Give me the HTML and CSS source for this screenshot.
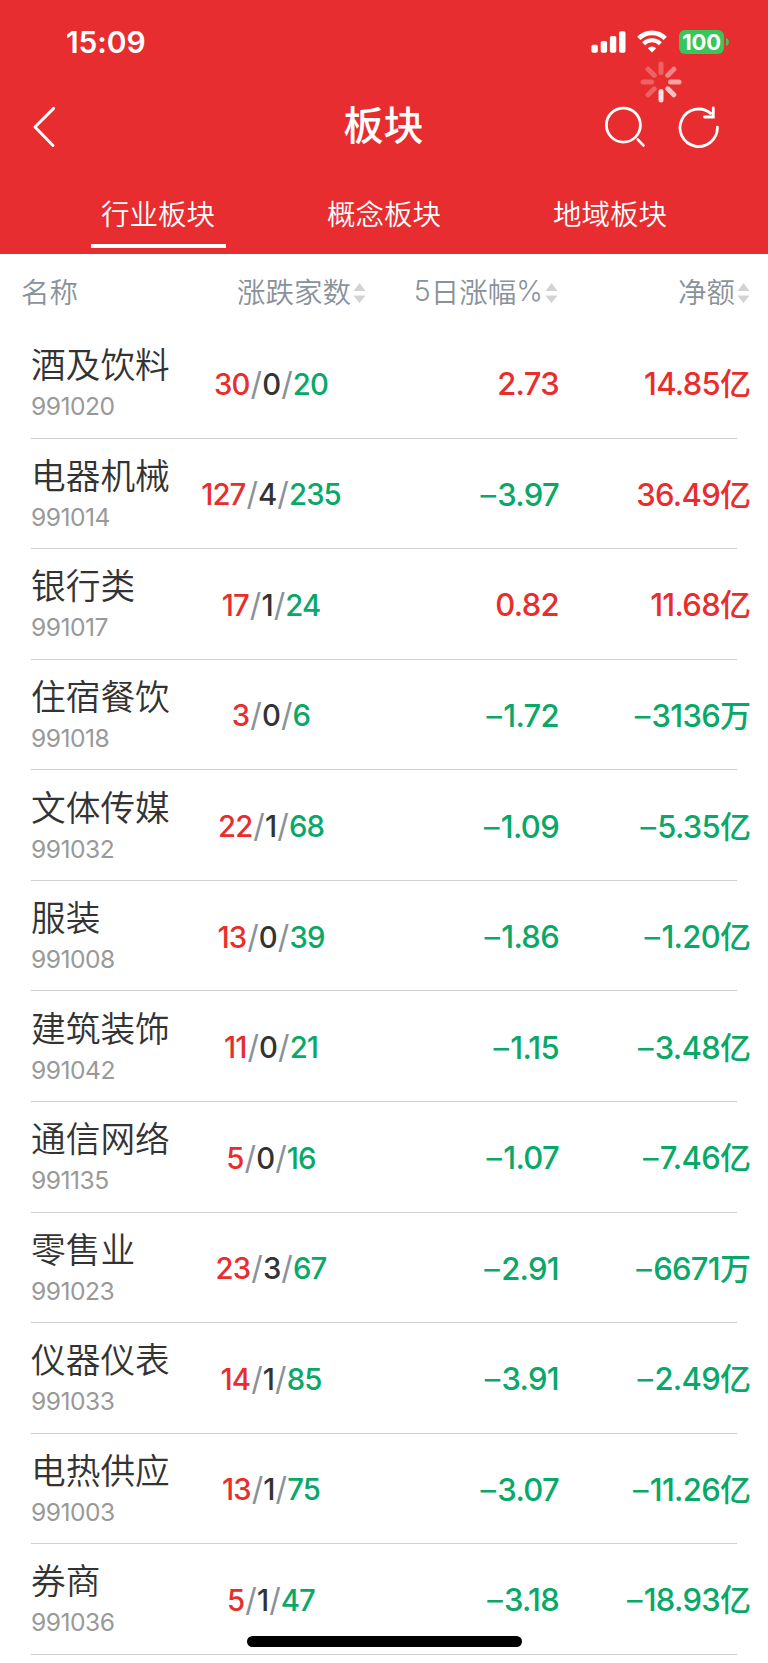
FILE: index.html
```html
<!DOCTYPE html>
<html lang="zh-CN">
<head>
<meta charset="utf-8">
<title>板块</title>
<link rel="stylesheet" href="styles.css">
</head>
<body>
<div class="screen">
<header class="top">
  <div class="status">
    <span class="time">15:09</span>
    <svg class="signal" width="36" height="24" viewBox="0 0 36 24" fill="#fff"><rect x="0.4" y="14.8" width="6.4" height="8" rx="1.8"/><rect x="9.7" y="10.9" width="6.4" height="11.9" rx="1.8"/><rect x="18.9" y="6" width="6.4" height="16.8" rx="1.8"/><rect x="28.1" y="1.2" width="6.4" height="21.6" rx="1.8"/></svg>
    <svg class="wifi" width="30" height="24" viewBox="0 0 30 24" fill="none" stroke="#fff"><path d="M1.8 8.4a18.6 18.6 0 0 1 26.4 0" stroke-width="4.6"/><path d="M6.6 13.7a12 12 0 0 1 16.8 0" stroke-width="4.2"/><path d="M15 22.6l-4.2-4.3a6 6 0 0 1 8.4 0z" fill="#fff" stroke="none"/></svg>
    <div class="battery"><span>100</span></div>
    <svg class="nub" width="3" height="8" viewBox="0 0 3 8"><path d="M0 0a4.2 4.2 0 0 1 0 8z" fill="#35c759"/></svg>
  </div>
  <svg class="spinner" width="42" height="42" viewBox="-21 -21 42 42" stroke="#fff" stroke-width="5" stroke-linecap="round"><path d="M0-9.5V-18" opacity=".25"/><path d="M6.8-6.8l6-6" opacity=".42"/><path d="M9.5 0H18" opacity=".56"/><path d="M6.8 6.8l6 6" opacity=".7"/><path d="M0 9.5V18" opacity=".86"/><path d="M-6.8 6.8l-6 6" opacity=".25"/><path d="M-9.5 0H-18" opacity=".25"/><path d="M-6.8-6.8l-6-6" opacity=".25"/></svg>
  <div class="nav">
    <svg class="back" width="24" height="42" viewBox="0 0 24 42" fill="none" stroke="#fff" stroke-width="2.9" stroke-linecap="round" stroke-linejoin="round"><path d="M21.6 2.4L3 21l18 18.4"/></svg>
    <h1 class="title">板块</h1>
    <div class="actions">
      <svg width="42" height="42" viewBox="0 0 42 42" fill="none" stroke="#fff" stroke-width="2.8" stroke-linecap="round"><circle cx="19.4" cy="19.1" r="17"/><path d="M33.8 33.6l5.6 5.8"/></svg>
      <svg width="42" height="42" viewBox="0 0 42 42" fill="none" stroke="#fff" stroke-width="2.8" stroke-linecap="round"><path d="M39.4 21.2A18.7 18.7 0 1 1 32.7 7.4"/><path d="M35.3 1.8v9.2h-8.8"/></svg>
    </div>
  </div>
  <nav class="tabs"><span class="tab active">行业板块</span><span class="tab">概念板块</span><span class="tab">地域板块</span></nav>
</header>
<div class="head">
  <span class="h-name">名称</span>
  <span class="h">涨跌家数<svg class="sort" width="13" height="20" viewBox="0 0 13 20"><path d="M6.5 0l6 8h-12zM6.5 20l6-7.6h-12z"/></svg></span>
  <span class="h"><i>5</i>日涨幅<i>%</i><svg class="sort" width="13" height="20" viewBox="0 0 13 20"><path d="M6.5 0l6 8h-12zM6.5 20l6-7.6h-12z"/></svg></span>
  <span class="h">净额<svg class="sort" width="13" height="20" viewBox="0 0 13 20"><path d="M6.5 0l6 8h-12zM6.5 20l6-7.6h-12z"/></svg></span>
</div>
<main class="list">
<div class="row"><div class="stock"><b>酒及饮料</b><small>991020</small></div><div class="count"><em class="up">30</em><s>/</s><em>0</em><s>/</s><em class="down">20</em></div><div class="pct up">2.73</div><div class="net up">14.85<u>亿</u></div></div>
<div class="row"><div class="stock"><b>电器机械</b><small>991014</small></div><div class="count"><em class="up">127</em><s>/</s><em>4</em><s>/</s><em class="down">235</em></div><div class="pct down"><i>–</i>3.97</div><div class="net up">36.49<u>亿</u></div></div>
<div class="row"><div class="stock"><b>银行类</b><small>991017</small></div><div class="count"><em class="up">17</em><s>/</s><em>1</em><s>/</s><em class="down">24</em></div><div class="pct up">0.82</div><div class="net up">11.68<u>亿</u></div></div>
<div class="row"><div class="stock"><b>住宿餐饮</b><small>991018</small></div><div class="count"><em class="up">3</em><s>/</s><em>0</em><s>/</s><em class="down">6</em></div><div class="pct down"><i>–</i>1.72</div><div class="net down"><i>–</i>3136<u>万</u></div></div>
<div class="row"><div class="stock"><b>文体传媒</b><small>991032</small></div><div class="count"><em class="up">22</em><s>/</s><em>1</em><s>/</s><em class="down">68</em></div><div class="pct down"><i>–</i>1.09</div><div class="net down"><i>–</i>5.35<u>亿</u></div></div>
<div class="row"><div class="stock"><b>服装</b><small>991008</small></div><div class="count"><em class="up">13</em><s>/</s><em>0</em><s>/</s><em class="down">39</em></div><div class="pct down"><i>–</i>1.86</div><div class="net down"><i>–</i>1.20<u>亿</u></div></div>
<div class="row"><div class="stock"><b>建筑装饰</b><small>991042</small></div><div class="count"><em class="up">11</em><s>/</s><em>0</em><s>/</s><em class="down">21</em></div><div class="pct down"><i>–</i>1.15</div><div class="net down"><i>–</i>3.48<u>亿</u></div></div>
<div class="row"><div class="stock"><b>通信网络</b><small>991135</small></div><div class="count"><em class="up">5</em><s>/</s><em>0</em><s>/</s><em class="down">16</em></div><div class="pct down"><i>–</i>1.07</div><div class="net down"><i>–</i>7.46<u>亿</u></div></div>
<div class="row"><div class="stock"><b>零售业</b><small>991023</small></div><div class="count"><em class="up">23</em><s>/</s><em>3</em><s>/</s><em class="down">67</em></div><div class="pct down"><i>–</i>2.91</div><div class="net down"><i>–</i>6671<u>万</u></div></div>
<div class="row"><div class="stock"><b>仪器仪表</b><small>991033</small></div><div class="count"><em class="up">14</em><s>/</s><em>1</em><s>/</s><em class="down">85</em></div><div class="pct down"><i>–</i>3.91</div><div class="net down"><i>–</i>2.49<u>亿</u></div></div>
<div class="row"><div class="stock"><b>电热供应</b><small>991003</small></div><div class="count"><em class="up">13</em><s>/</s><em>1</em><s>/</s><em class="down">75</em></div><div class="pct down"><i>–</i>3.07</div><div class="net down"><i>–</i>11.26<u>亿</u></div></div>
<div class="row"><div class="stock"><b>券商</b><small>991036</small></div><div class="count"><em class="up">5</em><s>/</s><em>1</em><s>/</s><em class="down">47</em></div><div class="pct down"><i>–</i>3.18</div><div class="net down"><i>–</i>18.93<u>亿</u></div></div>
</main>
<div class="home"></div>
</div>
</body>
</html>
```
FILE: styles.css
```css
* { box-sizing: border-box; }
body { margin: 0; background: #fff; font-family: Inter, "Noto Sans CJK SC", sans-serif; color: #333; }
i, em { font-style: normal; }
s, u { text-decoration: none; }
svg { display: block; flex: none; }
.screen { position: relative; width: 768px; height: 1663px; overflow: hidden; }

.top { height: 254px; background: #e72d2f; color: #fff; position: relative; display: flex; flex-direction: column; }
.status { height: 84px; padding: 0 39px 0 66px; display: flex; align-items: center; flex: none; }
.time { font-size: 30px; line-height: 36px; font-weight: 600; letter-spacing: -0.1px; margin-right: auto; }
.signal { margin-right: 10px; }
.wifi { margin-right: 12px; }
.battery { width: 45px; height: 24px; border-radius: 6px; background: #35c759; font-size: 22px; font-weight: 700; line-height: 24px; text-align: center; letter-spacing: -0.2px; }
.nub { margin-left: 2px; }
.spinner { position: absolute; left: 640px; top: 61px; }
.nav { height: 86px; display: grid; grid-template-columns: 1fr auto 1fr; align-items: center; padding: 0 48px 0 32px; flex: none; }
.title { margin: 0 0 8px 15px; font-size: 40px; line-height: 56px; font-weight: 500; font-family: "Noto Sans CJK SC", sans-serif; }
.actions { display: flex; gap: 32px; justify-content: flex-end; }
.tabs { height: 84px; padding: 0 45px; display: grid; grid-template-columns: repeat(3, 1fr); justify-items: center; align-items: end; font-family: "Noto Sans CJK SC", sans-serif; font-size: 28.5px; font-weight: 350; }
.tab { width: 135px; height: 64px; margin-bottom: 6px; padding-top: 9px; line-height: 40px; text-align: center; border-bottom: 4px solid transparent; }
.tab.active { border-color: #fff; }

.head { height: 74px; display: grid; grid-template-columns: 160px 206px 192px 192px; align-items: center; color: #89929b; font-family: "Noto Sans CJK SC", sans-serif; font-size: 28.5px; line-height: 40px; font-weight: 350; }
.h-name { padding-left: 21px; }
.h { display: flex; align-items: center; justify-content: flex-end; }
.h i { font-family: Inter, sans-serif; font-weight: 350; }
.sort { fill: #d3d3d3; margin: 3px 0 0 2px; }

.list { display: flex; flex-direction: column; }
.row { height: 110.57px; position: relative; display: grid; grid-template-columns: 153px 174px 201px 192px; margin-left: 31px; align-items: center; flex: none; }
.row::after { content: ""; position: absolute; left: 0; bottom: 0; width: 706px; height: 1px; background: #d0d0d0; }
.stock { display: flex; flex-direction: column; padding-bottom: 4px; }
.stock b { font-family: "Noto Sans CJK SC", sans-serif; font-size: 34.7px; line-height: 46px; font-weight: 350; }
.stock small { font-size: 24.6px; line-height: 32px; letter-spacing: -0.5px; color: #999; margin-top: 4px; }
.count { text-align: center; font-size: 29.3px; letter-spacing: -0.9px; font-weight: 450; white-space: nowrap; padding-top: 2px; }
.count s { color: #89929b; font-weight: 400; font-size: 32px; line-height: 1; margin: 0 1px; }
.pct, .net { text-align: right; font-size: 31px; line-height: 40px; letter-spacing: -0.7px; font-weight: 450; white-space: nowrap; padding-top: 2px; }
.pct i, .net i { margin-right: 2px; font-weight: 400; }
.net u { font-family: "Noto Sans CJK SC", sans-serif; font-weight: 500; letter-spacing: 0; line-height: 0; }
.up { color: #e92d2d; }
.down { color: #07a868; }
.home { position: absolute; left: 247px; top: 1636px; width: 275px; height: 11px; border-radius: 6px; background: #000; }
```
